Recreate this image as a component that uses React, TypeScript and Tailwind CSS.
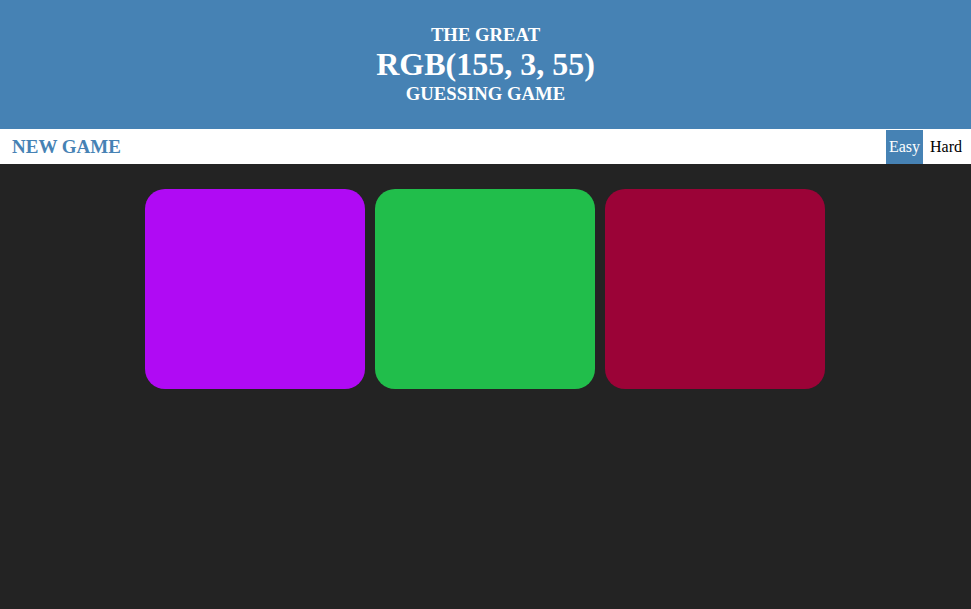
const squares = ["#b00af4", "#21be4b", "#9b0337"];

export default function App() {
  return (
    <div className="min-h-[609px] bg-[#232323] font-['Liberation_Serif',serif]">
      <header className="flex h-[129px] flex-col items-center justify-center bg-[#4682b4] pb-[2px] font-bold uppercase text-white">
        <div className="text-[18.7px] leading-[29px]">The Great</div>
        <div className="text-[32px] leading-[30px]">RGB(155, 3, 55)</div>
        <div className="text-[18.7px] leading-[29px]">Guessing Game</div>
      </header>

      <nav className="flex h-[35px] items-stretch justify-between bg-white">
        <button className="ml-3 pt-px text-[19px] font-bold uppercase text-[#4682b4]">New Game</button>
        <div className="flex items-stretch pr-[2px] pt-px">
          <button className="bg-[#4682b4] px-[3px] text-[16px] text-white">Easy</button>
          <button className="px-[7px] text-[16px] text-black">Hard</button>
        </div>
      </nav>

      <main className="mx-auto mt-[25px] flex w-[681px] gap-[10px]">
        {squares.map((c) => (
          <div key={c} className="h-[200px] w-[220px] rounded-[20px]" style={{ backgroundColor: c }} />
        ))}
      </main>
    </div>
  );
}
